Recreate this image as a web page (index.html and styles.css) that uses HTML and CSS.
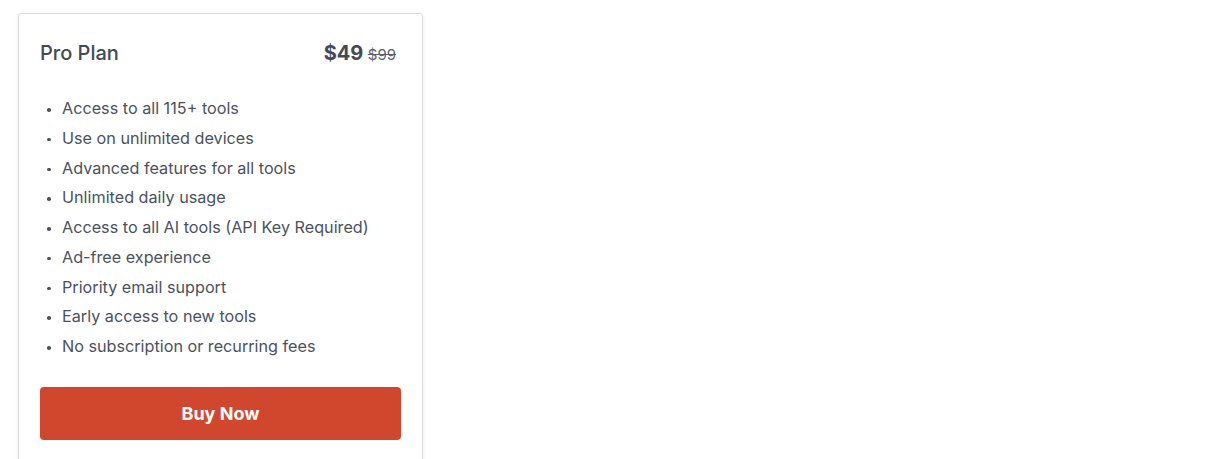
FILE: index.html
```html
<!DOCTYPE html>
<html lang="en">
<head>
<meta charset="UTF-8">
<meta name="viewport" content="width=device-width, initial-scale=1.0">
<title>Pro Plan</title>
<link rel="stylesheet" href="styles.css">
</head>
<body>
<div class="plan-card">
    <div class="plan-header">
        <h2 class="plan-name">Pro Plan</h2>
        <div class="plan-price">
            <span class="price-now">$49</span>
            <span class="price-old">$99</span>
        </div>
    </div>
    <ul class="feature-list">
        <li>Access to all 115+ tools</li>
        <li>Use on unlimited devices</li>
        <li>Advanced features for all tools</li>
        <li>Unlimited daily usage</li>
        <li>Access to all AI tools (API Key Required)</li>
        <li>Ad-free experience</li>
        <li>Priority email support</li>
        <li>Early access to new tools</li>
        <li>No subscription or recurring fees</li>
    </ul>
    <button class="buy-button">Buy Now</button>
</div>
</body>
</html>
```

FILE: styles.css
```css
body {
    font-family: Inter, "Open Sans", sans-serif;
    margin: 0;
    padding: 13px 18px;
    background-color: #fff;
    color: #4b525e;
}
.plan-card {
    width: 405px;
    box-sizing: border-box;
    padding: 22px 21px 24px;
    background-color: #fff;
    border: 1px solid #dcdcdc;
    border-radius: 3px;
    box-shadow: 0 1px 4px rgba(0, 0, 0, 0.08);
}
.plan-header {
    display: flex;
    justify-content: space-between;
    align-items: baseline;
    height: 34px;
    line-height: 34px;
    padding-right: 5px;
}
.plan-name {
    margin: 0;
    font-size: 20px;
    font-weight: 500;
    color: #434a55;
}
.plan-price {
    color: #434a55;
}
.price-now {
    font-size: 20px;
    font-weight: 700;
}
.price-old {
    font-size: 15px;
    text-decoration: line-through;
    color: #5a616c;
}
.feature-list {
    list-style: none;
    margin: 24px 0 25px;
    padding: 0;
}
.feature-list li {
    position: relative;
    padding-left: 22px;
    font-size: 16.2px;
    line-height: 29.75px;
}
.feature-list li::before {
    content: "";
    position: absolute;
    left: 7px;
    top: 14px;
    width: 3.5px;
    height: 3.5px;
    border-radius: 50%;
    background-color: #4b525e;
}
.buy-button {
    display: block;
    width: 100%;
    height: 53px;
    border: none;
    border-radius: 4px;
    background-color: #d0472d;
    color: #fff;
    font-family: inherit;
    font-size: 18px;
    font-weight: 700;
    cursor: pointer;
}
.buy-button:hover {
    background-color: #b93c25;
}
```
